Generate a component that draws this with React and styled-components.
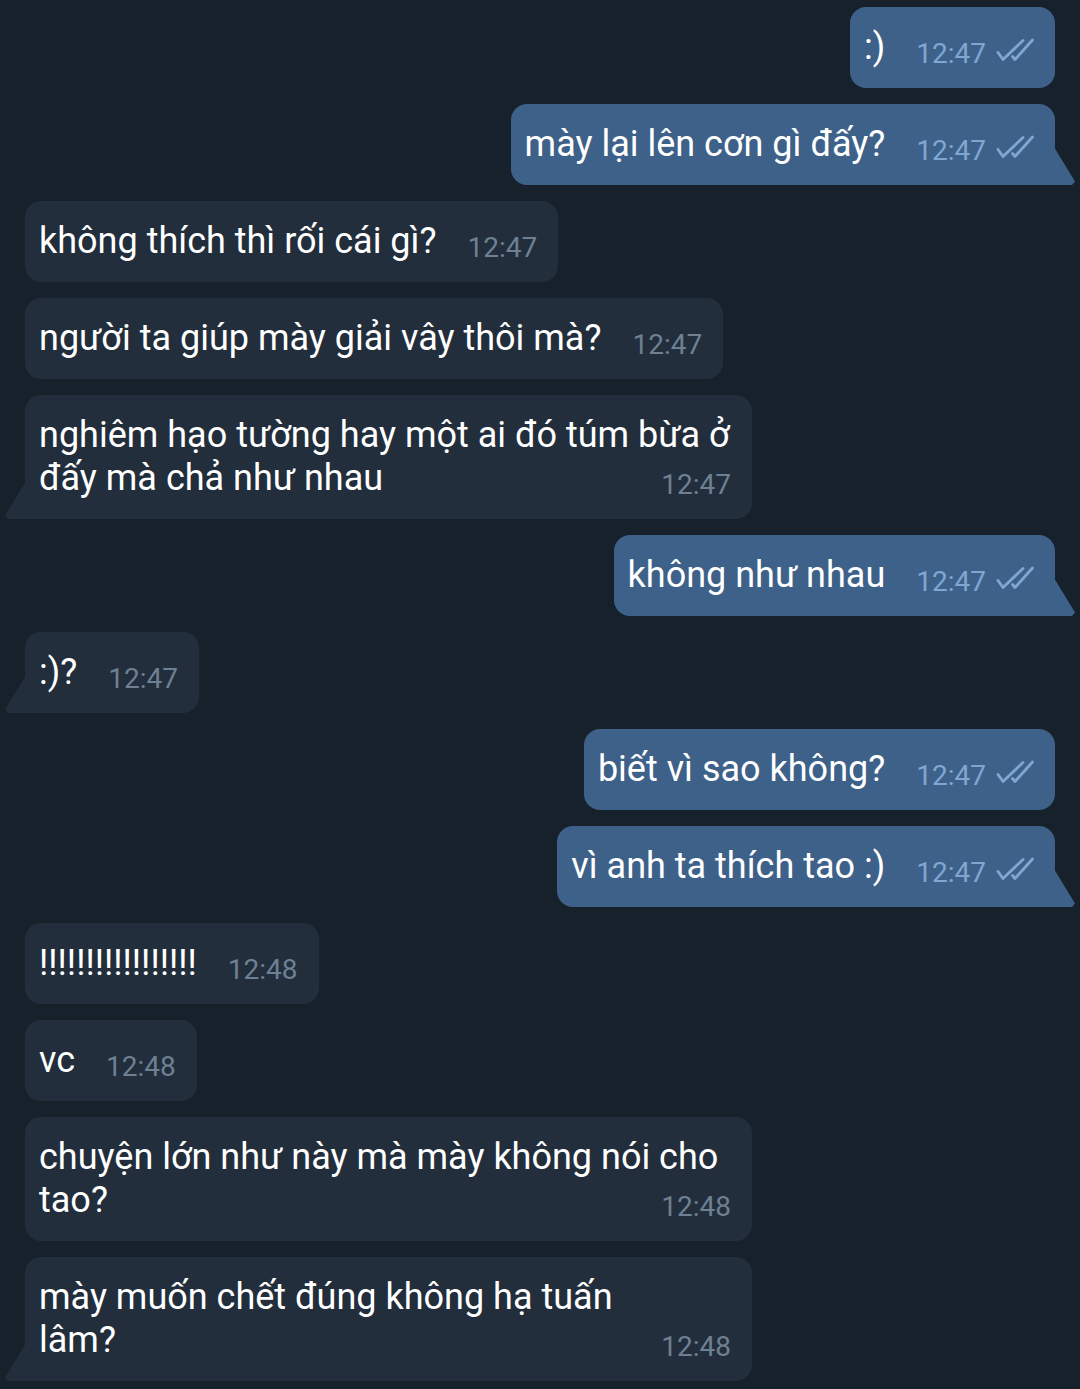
import React from 'react';
import styled, { createGlobalStyle, css } from 'styled-components';

const GlobalStyle = createGlobalStyle`
  html, body {
    margin: 0;
    padding: 0;
    background: #17212b;
  }
  body {
    font-family: Roboto, 'Noto Sans', sans-serif;
    -webkit-font-smoothing: antialiased;
  }
`;

const Chat = styled.div`
  display: flex;
  flex-direction: column;
  gap: 16px;
  padding: 7px 25px 20px;
  min-height: 1389px;
  box-sizing: border-box;
  background: #17212b;
`;

const Bubble = styled.div`
  position: relative;
  align-self: ${(p) => (p.$out ? 'flex-end' : 'flex-start')};
  max-width: 727px;
  ${(p) => p.$full && 'width: 727px;'}
  box-sizing: border-box;
  padding: 19px 12px 19px 14px;
  border-radius: 16px;
  background: ${(p) => (p.$out ? '#3e6189' : '#222e3b')};
  color: #ffffff;
  font-size: 36px;
  line-height: 43px;
  white-space: pre-wrap;
  overflow-wrap: break-word;

  ${(p) =>
    p.$tail &&
    css`
      ${p.$out ? 'border-bottom-right-radius: 0;' : 'border-bottom-left-radius: 0;'}
      &::after {
        content: '';
        position: absolute;
        bottom: 0;
        width: 21px;
        height: 38px;
        background: inherit;
        ${p.$out
          ? css`
              right: -20px;
              clip-path: polygon(0 0, 100% 91%, calc(100% - 3px) 100%, 0 100%);
            `
          : css`
              left: -20px;
              clip-path: polygon(100% 0, 100% 100%, 3px 100%, 0 91%);
            `}
      }
    `}
`;

const Meta = styled.span`
  float: right;
  display: flex;
  align-items: flex-start;
  gap: 10px;
  height: 28px;
  margin: 14px 9px 0 31px;
  font-size: 28px;
  line-height: 28px;
  white-space: nowrap;
  color: ${(p) => (p.$out ? '#7fa7d1' : '#6e8093')};
`;

const Ticks = styled.svg`
  width: 38px;
  height: 24px;
  margin-top: -2px;
  flex: none;
`;

const DoubleCheck = () => (
  <Ticks viewBox="0 0 38 24" fill="none" stroke="#7fa7d1" strokeWidth="2.8" strokeLinecap="round" strokeLinejoin="round">
    <path d="M2 14.5 L7 21.5 L27 2.5" />
    <path d="M16.5 18.5 L19 21.5 L36.5 2" />
  </Ticks>
);

const messages = [
  { out: true, text: ':)', time: '12:47' },
  { out: true, text: 'mày lại lên cơn gì đấy?', time: '12:47', tail: true },
  { text: 'không thích thì rối cái gì?', time: '12:47' },
  { text: 'người ta giúp mày giải vây thôi mà?', time: '12:47' },
  { text: 'nghiêm hạo tường hay một ai đó túm bừa ở đấy mà chả như nhau', time: '12:47', tail: true },
  { out: true, text: 'không như nhau', time: '12:47', tail: true },
  { text: ':)?', time: '12:47', tail: true },
  { out: true, text: 'biết vì sao không?', time: '12:47' },
  { out: true, text: 'vì anh ta thích tao :)', time: '12:47', tail: true },
  { text: '!!!!!!!!!!!!!!!!!', time: '12:48' },
  { text: 'vc', time: '12:48' },
  { text: 'chuyện lớn như này mà mày không nói cho tao?', time: '12:48' },
  { text: 'mày muốn chết đúng không hạ tuấn\nlâm?', time: '12:48', tail: true, full: true },
];

const Message = ({ out, text, time, tail, full }) => (
  <Bubble $out={out} $tail={tail} $full={full}>
    {text}
    <Meta $out={out}>
      {time}
      {out && <DoubleCheck />}
    </Meta>
  </Bubble>
);

const App = () => (
  <>
    <GlobalStyle />
    <Chat>
      {messages.map((m, i) => (
        <Message key={i} {...m} />
      ))}
    </Chat>
  </>
);

export default App;
